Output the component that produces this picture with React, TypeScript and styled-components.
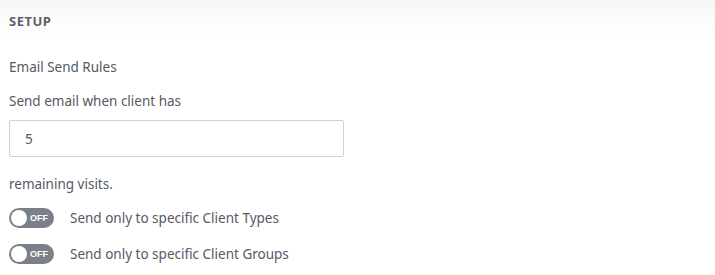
import React from 'react'
import styled, { createGlobalStyle } from 'styled-components'

const Global = createGlobalStyle`
  html, body {
    margin: 0;
    padding: 0;
    background: #fff;
  }
  body {
    font-family: 'Noto Sans', 'Open Sans', sans-serif;
    color: #555965;
  }
`

const Page = styled.div`
  width: 715px;
  height: 275px;
  overflow: hidden;
  background: #fff;
`

const Header = styled.div`
  height: 42px;
  padding: 0 9px;
  display: flex;
  align-items: center;
  background: linear-gradient(to bottom, #f6f6f6 0%, #fcfcfc 50%, #ffffff 100%);
  font-size: 13px;
  font-weight: 700;
  color: #5b5f6b;
  letter-spacing: 0.5px;
`

const Body = styled.div`
  padding: 16px 9px 0;
  display: flex;
  flex-direction: column;
`

const Text = styled.div<{ $mb?: number }>`
  font-size: 13.5px;
  line-height: 18px;
  margin-bottom: ${p => p.$mb ?? 0}px;
`

const Input = styled.input`
  box-sizing: border-box;
  width: 335px;
  height: 37px;
  border: 1px solid #cfd1d6;
  border-radius: 2px;
  padding: 0 15px;
  font-family: inherit;
  font-size: 13.5px;
  color: #555965;
  margin-bottom: 18px;
  outline: none;
`

const Row = styled.div<{ $mb?: number }>`
  display: flex;
  align-items: center;
  gap: 16px;
  margin-bottom: ${p => p.$mb ?? 0}px;
`

const Toggle = styled.div`
  box-sizing: border-box;
  width: 45px;
  height: 20px;
  border-radius: 10px;
  background: #7b7f87;
  display: flex;
  align-items: center;
  padding: 0 2px;
  gap: 3px;
`

const Knob = styled.span`
  width: 16px;
  height: 16px;
  border-radius: 50%;
  background: #fff;
`

const ToggleText = styled.span`
  font-family: 'Liberation Sans', Arial, sans-serif;
  font-size: 9px;
  font-weight: 700;
  color: #fff;
`

const Switch = () => (
  <Toggle>
    <Knob />
    <ToggleText>OFF</ToggleText>
  </Toggle>
)

export default function App() {
  return (
    <Page>
      <Global />
      <Header>SETUP</Header>
      <Body>
        <Text $mb={16}>Email Send Rules</Text>
        <Text $mb={10}>Send email when client has</Text>
        <Input defaultValue="5" />
        <Text $mb={15}>remaining visits.</Text>
        <Row $mb={16}>
          <Switch />
          <Text>Send only to specific Client Types</Text>
        </Row>
        <Row>
          <Switch />
          <Text>Send only to specific Client Groups</Text>
        </Row>
      </Body>
    </Page>
  )
}
